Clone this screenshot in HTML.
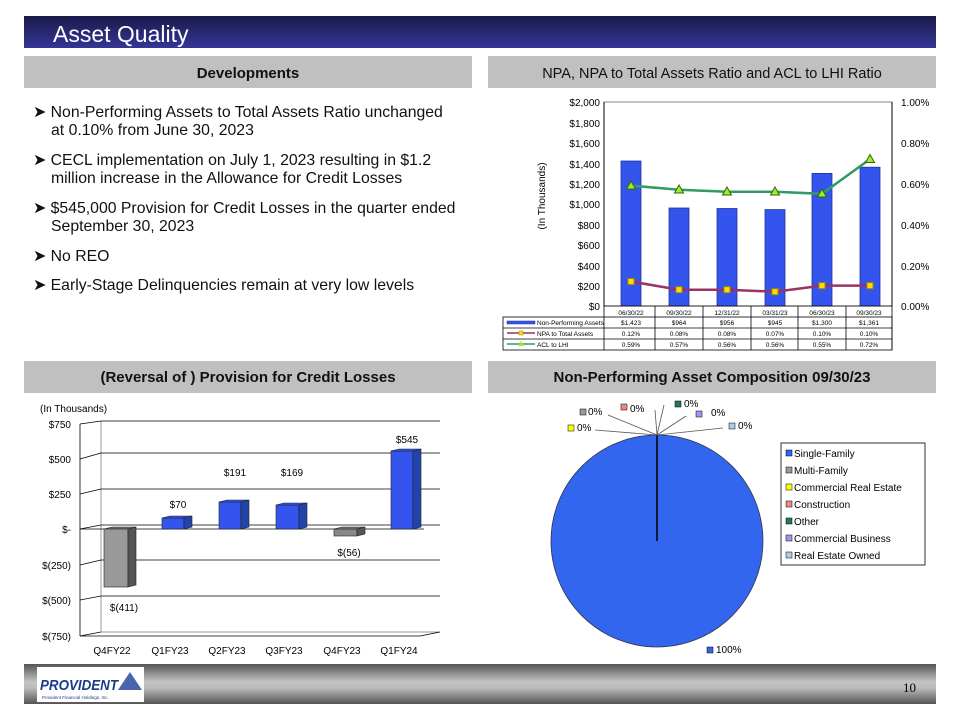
<!DOCTYPE html>
<html><head><meta charset="utf-8"><style>
html,body{margin:0;padding:0;background:#fff;width:960px;height:720px;overflow:hidden}
svg{display:block;font-family:"Liberation Sans",sans-serif}
</style></head><body>
<svg width="960" height="720" viewBox="0 0 960 720" xmlns="http://www.w3.org/2000/svg">
<defs>
<linearGradient id="tg" x1="0" y1="0" x2="0" y2="1"><stop offset="0" stop-color="#1a1a4a"/><stop offset="1" stop-color="#353597"/></linearGradient>
<linearGradient id="fg" x1="0" y1="0" x2="0" y2="1"><stop offset="0" stop-color="#555"/><stop offset="0.45" stop-color="#c4c4c4"/><stop offset="0.6" stop-color="#bbb"/><stop offset="1" stop-color="#555"/></linearGradient>
</defs>
<rect x="24" y="16" width="912" height="32" fill="url(#tg)"/>
<text x="53" y="42" font-size="23" fill="#fff">Asset Quality</text>
<rect x="24" y="56" width="448" height="32" fill="#c0c0c0"/>
<text x="248" y="78" font-size="15" text-anchor="middle" font-weight="bold" fill="#111">Developments</text>
<rect x="488" y="56" width="448" height="32" fill="#c0c0c0"/>
<text x="712" y="78" font-size="14.5" text-anchor="middle" fill="#111">NPA, NPA to Total Assets Ratio and ACL to LHI Ratio</text>
<rect x="24" y="361" width="448" height="32" fill="#c0c0c0"/>
<text x="248" y="382" font-size="15" text-anchor="middle" font-weight="bold" fill="#111">(Reversal of ) Provision for Credit Losses</text>
<rect x="488" y="361" width="448" height="32" fill="#c0c0c0"/>
<text x="712" y="382" font-size="15" text-anchor="middle" font-weight="bold" fill="#111">Non-Performing Asset Composition 09/30/23</text>
<g font-size="15.8" fill="#111">
<text x="33" y="117">➤ Non-Performing Assets to Total Assets Ratio unchanged</text>
<text x="51" y="135">at 0.10% from June 30, 2023</text>
<text x="33" y="165">➤ CECL implementation on July 1, 2023 resulting in $1.2</text>
<text x="51" y="183">million increase in the Allowance for Credit Losses</text>
<text x="33" y="213">➤ $545,000 Provision for Credit Losses in the quarter ended</text>
<text x="51" y="231">September 30, 2023</text>
<text x="33" y="261">➤ No REO</text>
<text x="33" y="290">➤ Early-Stage Delinquencies remain at very low levels</text>
</g>
<g font-size="10" fill="#000">
<rect x="604" y="102" width="288" height="204" fill="#fff" stroke="#888"/>
<g stroke="#000"><line x1="604" y1="102" x2="604" y2="306"/><line x1="892" y1="102" x2="892" y2="306"/></g>
<g text-anchor="end">
<text x="600" y="106">$2,000</text><text x="600" y="127">$1,800</text><text x="600" y="147">$1,600</text><text x="600" y="168">$1,400</text><text x="600" y="188">$1,200</text><text x="600" y="208">$1,000</text><text x="600" y="229">$800</text><text x="600" y="249">$600</text><text x="600" y="270">$400</text><text x="600" y="290">$200</text><text x="600" y="310">$0</text>
</g>
<g><text x="901" y="106">1.00%</text><text x="901" y="147">0.80%</text><text x="901" y="188">0.60%</text><text x="901" y="229">0.40%</text><text x="901" y="270">0.20%</text><text x="901" y="310">0.00%</text></g>
<text transform="translate(545,196) rotate(-90)" text-anchor="middle" font-size="10">(In Thousands)</text>
<g fill="#3355ee" stroke="#223399" stroke-width="0.8">
<rect x="621" y="161" width="20" height="145"/><rect x="669" y="208" width="20" height="98"/><rect x="717" y="208.5" width="20" height="97.5"/><rect x="765" y="209.6" width="20" height="96.4"/><rect x="812" y="173.4" width="20" height="132.6"/><rect x="860" y="167.2" width="20" height="138.8"/>
</g>
<polyline points="631,281.5 679,289.7 727,289.7 775,291.7 822,285.6 870,285.6" fill="none" stroke="#993366" stroke-width="2.5"/>
<g fill="#ffdd00" stroke="#aa8800"><rect x="628" y="278.5" width="6" height="6"/><rect x="676" y="286.7" width="6" height="6"/><rect x="724" y="286.7" width="6" height="6"/><rect x="772" y="288.7" width="6" height="6"/><rect x="819" y="282.6" width="6" height="6"/><rect x="867" y="282.6" width="6" height="6"/></g>
<polyline points="631,185.6 679,189.7 727,191.8 775,191.8 822,193.8 870,159.1" fill="none" stroke="#339966" stroke-width="2.5"/>
<g fill="#99ee33" stroke="#336600"><polygon points="631,181 635.5,189 626.5,189"/><polygon points="679,185 683.5,193 674.5,193"/><polygon points="727,187 731.5,195 722.5,195"/><polygon points="775,187 779.5,195 770.5,195"/><polygon points="822,189 826.5,197 817.5,197"/><polygon points="870,154.5 874.5,162.5 865.5,162.5"/></g>
<g stroke="#000" stroke-width="0.8" fill="none">
<rect x="503" y="317" width="389" height="33"/>
<line x1="604" y1="306" x2="892" y2="306"/>
<line x1="503" y1="328" x2="892" y2="328"/><line x1="503" y1="339" x2="892" y2="339"/>
<line x1="604" y1="306" x2="604" y2="350"/><line x1="655" y1="306" x2="655" y2="350"/><line x1="703" y1="306" x2="703" y2="350"/><line x1="751" y1="306" x2="751" y2="350"/><line x1="798" y1="306" x2="798" y2="350"/><line x1="846" y1="306" x2="846" y2="350"/><line x1="892" y1="306" x2="892" y2="350"/>
</g>
<g font-size="6.5" text-anchor="middle">
<text x="631" y="315">06/30/22</text><text x="679" y="315">09/30/22</text><text x="727" y="315">12/31/22</text><text x="775" y="315">03/31/23</text><text x="822" y="315">06/30/23</text><text x="869" y="315">09/30/23</text>
<text x="631" y="325">$1,423</text><text x="679" y="325">$964</text><text x="727" y="325">$956</text><text x="775" y="325">$945</text><text x="822" y="325">$1,300</text><text x="869" y="325">$1,361</text>
<text x="631" y="336">0.12%</text><text x="679" y="336">0.08%</text><text x="727" y="336">0.08%</text><text x="775" y="336">0.07%</text><text x="822" y="336">0.10%</text><text x="869" y="336">0.10%</text>
<text x="631" y="347">0.59%</text><text x="679" y="347">0.57%</text><text x="727" y="347">0.56%</text><text x="775" y="347">0.56%</text><text x="822" y="347">0.55%</text><text x="869" y="347">0.72%</text>
</g>
<g font-size="6.5"><text x="537" y="325">Non-Performing Assets</text><text x="537" y="336">NPA to Total Assets</text><text x="537" y="347">ACL to LHI</text></g>
<rect x="507" y="321" width="28" height="3" fill="#3355ee" stroke="#223399" stroke-width="0.5"/>
<line x1="507" y1="333" x2="535" y2="333" stroke="#993366" stroke-width="1.5"/><rect x="519" y="331" width="4" height="4" fill="#ffdd00" stroke="#aa8800" stroke-width="0.5"/>
<line x1="507" y1="344" x2="535" y2="344" stroke="#339966" stroke-width="1.5"/><polygon points="521,341 524,346 518,346" fill="#99ee33"/>
</g>
<g font-size="10">
<text x="40" y="412">(In Thousands)</text>
<g stroke="#999" fill="none"><line x1="101" y1="421" x2="101" y2="632"/><line x1="101" y1="632" x2="440" y2="632"/></g>
<g stroke="#000" stroke-width="0.8">
<line x1="101" y1="421" x2="440" y2="421"/><line x1="101" y1="453" x2="440" y2="453"/><line x1="101" y1="489" x2="440" y2="489"/><line x1="101" y1="560" x2="440" y2="560"/><line x1="101" y1="596" x2="440" y2="596"/>
<line x1="80" y1="424" x2="101" y2="421"/><line x1="80" y1="459" x2="101" y2="453"/><line x1="80" y1="494" x2="101" y2="489"/><line x1="80" y1="565" x2="101" y2="560"/><line x1="80" y1="600" x2="101" y2="596"/><line x1="80" y1="636" x2="101" y2="632"/><line x1="80" y1="529" x2="101" y2="525"/>
<line x1="80" y1="424" x2="80" y2="636"/><line x1="80" y1="636" x2="420" y2="636"/><line x1="420" y1="636" x2="440" y2="632"/>
<line x1="80" y1="529" x2="424" y2="529"/><line x1="101" y1="525" x2="440" y2="525"/>
</g>
<g text-anchor="end"><text x="71" y="428">$750</text><text x="71" y="463">$500</text><text x="71" y="498">$250</text><text x="71" y="533">$-</text><text x="71" y="569">$(250)</text><text x="71" y="604">$(500)</text><text x="71" y="640">$(750)</text></g>
<g stroke="#222" stroke-width="0.6">
<polygon points="104,529 128,529 136,527 112,527" fill="#777"/><rect x="104" y="529" width="24" height="58" fill="#999"/><polygon points="128,529 136,527 136,585 128,587" fill="#555"/>
<rect x="162" y="518" width="22" height="11" fill="#3355ee"/><polygon points="162,518 184,518 192,516 170,516" fill="#3355ee"/><polygon points="184,518 192,516 192,527 184,529" fill="#2244aa"/>
<rect x="219" y="502" width="22" height="27" fill="#3355ee"/><polygon points="219,502 241,502 249,500 227,500" fill="#3355ee"/><polygon points="241,502 249,500 249,527 241,529" fill="#2244aa"/>
<rect x="276" y="505" width="23" height="24" fill="#3355ee"/><polygon points="276,505 299,505 307,503 284,503" fill="#3355ee"/><polygon points="299,505 307,503 307,527 299,529" fill="#2244aa"/>
<rect x="334" y="529" width="23" height="7" fill="#888"/><polygon points="334,529 357,529 365,527 342,527" fill="#777"/><polygon points="357,529 365,527 365,534 357,536" fill="#555"/>
<rect x="391" y="451" width="22" height="78" fill="#3355ee"/><polygon points="391,451 413,451 421,449 399,449" fill="#3355ee"/><polygon points="413,451 421,449 421,527 413,529" fill="#2244aa"/>
</g>
<g text-anchor="middle"><text x="124" y="611">$(411)</text><text x="178" y="508">$70</text><text x="235" y="476">$191</text><text x="292" y="476">$169</text><text x="349" y="556">$(56)</text><text x="407" y="443">$545</text></g>
<g text-anchor="middle"><text x="112" y="654">Q4FY22</text><text x="170" y="654">Q1FY23</text><text x="227" y="654">Q2FY23</text><text x="284" y="654">Q3FY23</text><text x="342" y="654">Q4FY23</text><text x="399" y="654">Q1FY24</text></g>
</g>
<g font-size="10">
<circle cx="657" cy="541" r="106" fill="#3366ee" stroke="#334" stroke-width="0.8"/>
<line x1="657" y1="435" x2="657" y2="541" stroke="#000" stroke-width="1.5"/>
<g stroke="#555" stroke-width="0.8" fill="none">
<polyline points="595,430 657,435"/><polyline points="608,415 657,435"/><polyline points="655,410 657,435"/><polyline points="664,405 657,435"/><polyline points="686,416 657,435"/><polyline points="723,428 657,435"/>
</g>
<rect x="568" y="425" width="6" height="6" fill="#ffff00" stroke="#000" stroke-width="0.5"/><text x="577" y="431">0%</text>
<rect x="580" y="409" width="6" height="6" fill="#999" stroke="#000" stroke-width="0.5"/><text x="588" y="415">0%</text>
<rect x="621" y="404" width="6" height="6" fill="#ee8888" stroke="#000" stroke-width="0.5"/><text x="630" y="412">0%</text>
<rect x="675" y="401" width="6" height="6" fill="#227766" stroke="#000" stroke-width="0.5"/><text x="684" y="407">0%</text>
<rect x="696" y="411" width="6" height="6" fill="#9999ee" stroke="#000" stroke-width="0.5"/><text x="711" y="416">0%</text>
<rect x="729" y="423" width="6" height="6" fill="#aaccee" stroke="#000" stroke-width="0.5"/><text x="738" y="429">0%</text>
<rect x="707" y="647" width="6" height="6" fill="#3366ee" stroke="#000" stroke-width="0.5"/><text x="716" y="653">100%</text>
<rect x="781" y="443" width="144" height="122" fill="#fff" stroke="#000" stroke-width="0.8"/>
<g stroke="#000" stroke-width="0.5">
<rect x="786" y="450" width="6" height="6" fill="#3366ee"/><rect x="786" y="467" width="6" height="6" fill="#999"/><rect x="786" y="484" width="6" height="6" fill="#ffff00"/><rect x="786" y="501" width="6" height="6" fill="#ee8888"/><rect x="786" y="518" width="6" height="6" fill="#227766"/><rect x="786" y="535" width="6" height="6" fill="#9999ee"/><rect x="786" y="552" width="6" height="6" fill="#aaccee"/>
</g>
<g><text x="794" y="457">Single-Family</text><text x="794" y="474">Multi-Family</text><text x="794" y="491">Commercial Real Estate</text><text x="794" y="508">Construction</text><text x="794" y="525">Other</text><text x="794" y="542">Commercial Business</text><text x="794" y="559">Real Estate Owned</text></g>
</g>
<rect x="24" y="664" width="912" height="40" fill="url(#fg)"/>
<rect x="37" y="667" width="107" height="35" fill="#fff"/>
<text x="40" y="690" font-size="15" font-weight="bold" font-style="italic" fill="#1a3a8a" textLength="78" lengthAdjust="spacingAndGlyphs">PROVIDENT</text>
<polygon points="118,690 130,672 142,690" fill="#2a4aa0" opacity="0.85"/>
<text x="42" y="699" font-size="4.5" fill="#1a3a8a">Provident Financial Holdings, Inc.</text>
<text x="903" y="692" font-size="13" fill="#000" font-family="Liberation Serif,serif">10</text>
</svg>
</body></html>
